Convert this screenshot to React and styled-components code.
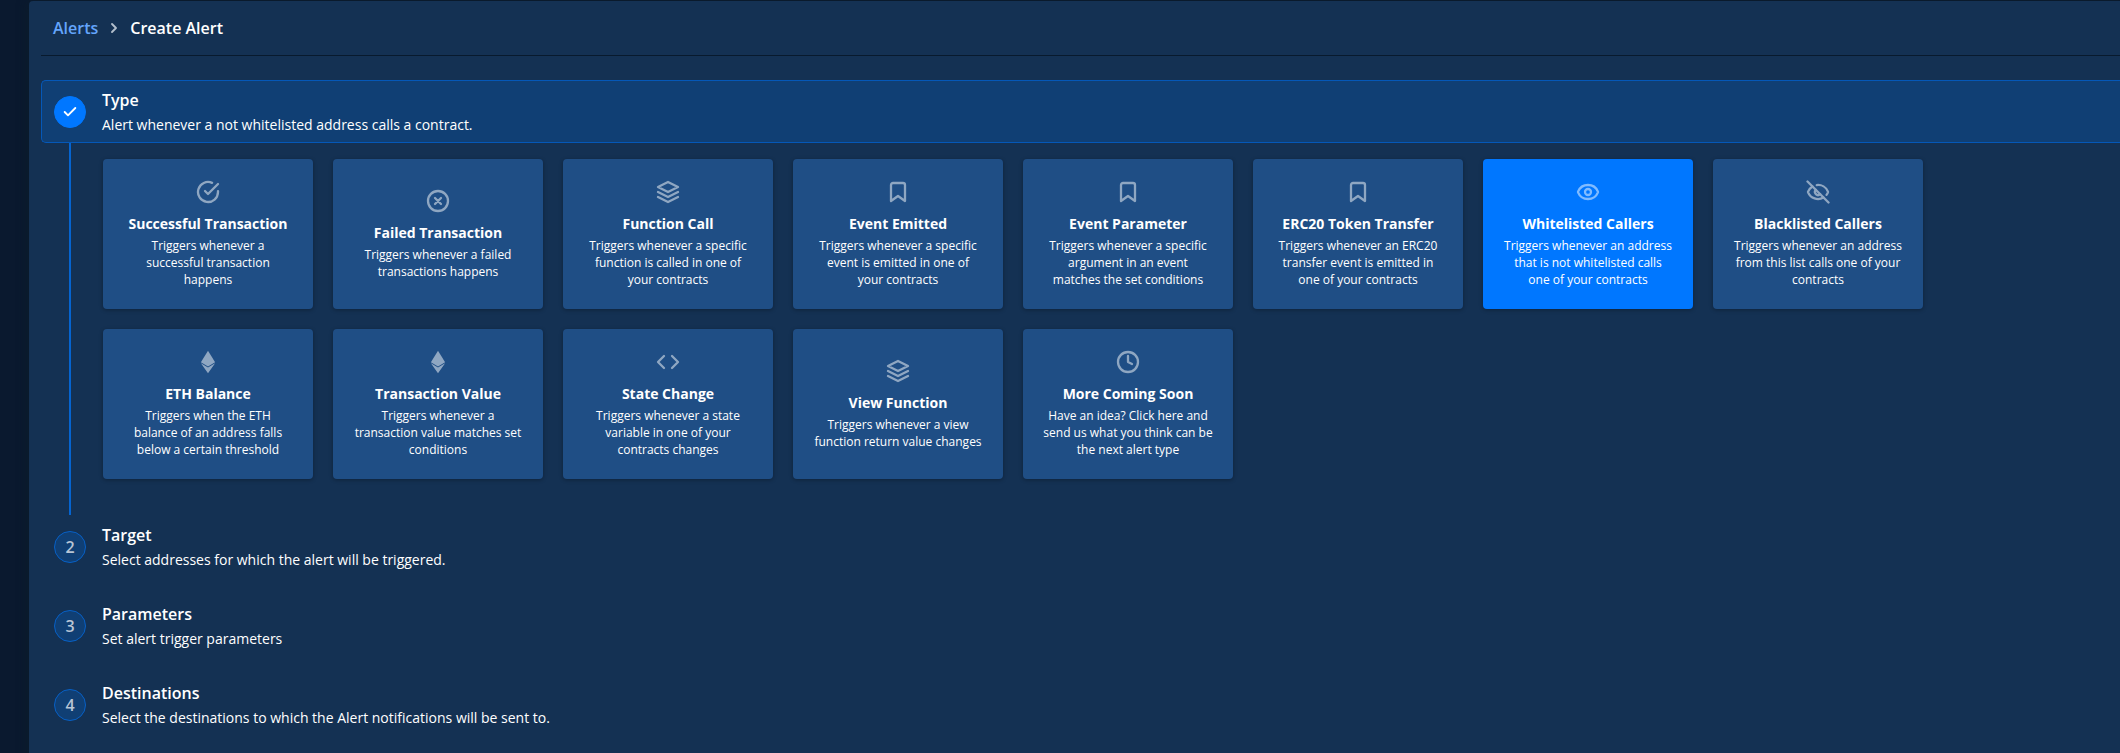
import React from "react";
import styled, { createGlobalStyle } from "styled-components";

const Global = createGlobalStyle`
  *, *::before, *::after { box-sizing: border-box; }
  body {
    margin: 0;
    background: #0a192f;
    color: #fff;
    font-family: "Open Sans", sans-serif;
    font-size: 14px;
    overflow: hidden;
  }
  h3, p { margin: 0; }
`;

const Page = styled.div`
  height: 753px;
  padding: 1px 0 0 29px;
  overflow: hidden;
`;

const Panel = styled.main`
  height: 800px;
  padding: 0 0 0 12px;
  background: #143153;
  border-top-left-radius: 4px;
  box-shadow: 0 0 12px rgba(12, 30, 42, 0.9);
`;

const Breadcrumbs = styled.nav`
  display: flex;
  align-items: center;
  height: 55px;
  padding: 0 0 0 12px;
  border-bottom: 1px solid #081a2e;
  font-size: 16px;
  font-weight: 600;
`;

const Crumb = styled.span`
  color: ${(p) => (p.$link ? "#64a5fc" : "#fff")};
`;

const CrumbArrow = styled.svg`
  width: 16px;
  height: 16px;
  margin: 0 8px;
  color: #b3bfcc;
`;

const Steps = styled.div`
  display: flex;
  flex-direction: column;
  margin-top: 24px;
`;

const StepHeader = styled.header`
  display: flex;
  align-items: center;
  gap: 16px;
  height: 63px;
  padding: 0 12px;
  margin-bottom: ${(p) => (p.$active ? "0" : "16px")};
  border: 1px solid ${(p) => (p.$active ? "#0558b8" : "transparent")};
  border-right: 0;
  border-radius: 5px 0 0 5px;
  background: ${(p) => (p.$active ? "#103f74" : "transparent")};
`;

const StepBadge = styled.div`
  display: flex;
  align-items: center;
  justify-content: center;
  flex: none;
  width: 32px;
  height: 32px;
  border-radius: 50%;
  border: 1px solid ${(p) => (p.$done ? "#0077ff" : "#0760c6")};
  background: ${(p) => (p.$done ? "#0077ff" : "#103f74")};
  color: ${(p) => (p.$done ? "#fff" : "#b8c5d5")};
  font-size: 16px;
  font-weight: 600;
`;

const StepLabel = styled.div`
  padding-top: 1px;
`;

const StepTitle = styled.h3`
  font-size: 16px;
  font-weight: 600;
  line-height: 24px;
`;

const StepText = styled.p`
  margin-top: 1px;
  font-size: 14px;
  line-height: 24px;
`;

const StepBody = styled.section`
  height: 372px;
  margin-left: 28px;
  padding: 16px 0 0 32px;
  border-left: 2px solid #0564d0;
`;

const CardGrid = styled.div`
  display: grid;
  grid-template-columns: repeat(8, 210px);
  grid-auto-rows: 150px;
  gap: 20px;
`;

const Card = styled.article`
  display: flex;
  flex-direction: column;
  align-items: center;
  justify-content: center;
  padding: 0 20px;
  border-radius: 4px;
  background: ${(p) => (p.$selected ? "#0077ff" : "#1f4e85")};
  box-shadow: 0 1px 4px rgba(0, 0, 0, 0.3);
  text-align: center;
`;

const CardIcon = styled.svg`
  width: 24px;
  height: 24px;
  flex: none;
  margin-bottom: 9px;
  color: #fff;
  opacity: 0.5;
`;

const CardTitle = styled.h3`
  font-size: 14px;
  font-weight: 700;
  line-height: 22px;
  white-space: nowrap;
`;

const CardText = styled.p`
  font-size: 12px;
  line-height: 17px;
  padding-top: 2px;
`;

const stroke = {
  fill: "none",
  stroke: "currentColor",
  strokeWidth: 2.3,
  strokeLinecap: "round",
  strokeLinejoin: "round",
};

const icons = {
  check: (
    <g {...stroke}>
      <path d="M22 11.08V12a10 10 0 1 1-5.93-9.14" />
      <polyline points="22 4 12 14.01 9 11.01" />
    </g>
  ),
  cross: (
    <g {...stroke}>
      <circle cx="12" cy="12" r="10" />
      <path d="M15 9l-6 6M9 9l6 6" />
    </g>
  ),
  layers: (
    <g {...stroke}>
      <polygon points="12 2 2 7 12 12 22 7 12 2" />
      <polyline points="2 17 12 22 22 17" />
      <polyline points="2 12 12 17 22 12" />
    </g>
  ),
  bookmark: (
    <g {...stroke}>
      <path d="M19 21l-7-5-7 5V5a2 2 0 0 1 2-2h10a2 2 0 0 1 2 2z" />
    </g>
  ),
  eye: (
    <g {...stroke}>
      <path d="M2.062 12.348a1 1 0 0 1 0-.696 10.75 10.75 0 0 1 19.876 0 1 1 0 0 1 0 .696 10.75 10.75 0 0 1-19.876 0" />
      <circle cx="12" cy="12" r="3" />
    </g>
  ),
  eyeOff: (
    <g {...stroke}>
      <path d="M10.733 5.076a10.744 10.744 0 0 1 11.205 6.575 1 1 0 0 1 0 .696 10.747 10.747 0 0 1-1.444 2.49" />
      <path d="M14.084 14.158a3 3 0 0 1-4.242-4.242" />
      <path d="M17.479 17.499a10.75 10.75 0 0 1-15.417-5.151 1 1 0 0 1 0-.696 10.75 10.75 0 0 1 4.446-5.143" />
      <path d="M1.5 1.5l21 21" />
    </g>
  ),
  eth: (
    <g fill="currentColor">
      <path d="M12 0.8 19.1 12.3 12 16.4 4.9 12.3z" />
      <path d="M4.9 13.3 12 17.4 19.1 13.3 12 23.2z" />
    </g>
  ),
  code: (
    <g {...stroke}>
      <polyline points="16 18 22 12 16 6" />
      <polyline points="8 6 2 12 8 18" />
    </g>
  ),
  clock: (
    <g {...stroke}>
      <circle cx="12" cy="12" r="10" />
      <polyline points="12 6 12 12 16 14" />
    </g>
  ),
};

const alertTypes = [
  ["check", "Successful Transaction", "Triggers whenever a successful transaction happens"],
  ["cross", "Failed Transaction", "Triggers whenever a failed transactions happens"],
  ["layers", "Function Call", "Triggers whenever a specific function is called in one of your contracts"],
  ["bookmark", "Event Emitted", "Triggers whenever a specific event is emitted in one of your contracts"],
  ["bookmark", "Event Parameter", "Triggers whenever a specific argument in an event matches the set conditions"],
  ["bookmark", "ERC20 Token Transfer", "Triggers whenever an ERC20 transfer event is emitted in one of your contracts"],
  ["eye", "Whitelisted Callers", "Triggers whenever an address that is not whitelisted calls one of your contracts"],
  ["eyeOff", "Blacklisted Callers", "Triggers whenever an address from this list calls one of your contracts"],
  ["eth", "ETH Balance", "Triggers when the ETH balance of an address falls below a certain threshold"],
  ["eth", "Transaction Value", "Triggers whenever a transaction value matches set conditions"],
  ["code", "State Change", "Triggers whenever a state variable in one of your contracts changes"],
  ["layers", "View Function", "Triggers whenever a view function return value changes"],
  ["clock", "More Coming Soon", "Have an idea? Click here and send us what you think can be the next alert type"],
];

const pendingSteps = [
  [2, "Target", "Select addresses for which the alert will be triggered."],
  [3, "Parameters", "Set alert trigger parameters"],
  [4, "Destinations", "Select the destinations to which the Alert notifications will be sent to."],
];

function Step({ badge, title, text, active }) {
  return (
    <StepHeader $active={active}>
      <StepBadge $done={active}>{badge}</StepBadge>
      <StepLabel>
        <StepTitle>{title}</StepTitle>
        <StepText>{text}</StepText>
      </StepLabel>
    </StepHeader>
  );
}

export default function App() {
  return (
    <Page>
      <Global />
      <Panel>
        <Breadcrumbs>
          <Crumb $link>Alerts</Crumb>
          <CrumbArrow viewBox="0 0 24 24">
            <polyline {...stroke} strokeWidth={2.8} points="9 18 15 12 9 6" />
          </CrumbArrow>
          <Crumb>Create Alert</Crumb>
        </Breadcrumbs>
        <Steps>
          <Step
            active
            badge={
              <svg width="16" height="16" viewBox="0 0 24 24">
                <polyline {...stroke} strokeWidth={2.8} points="20 6 9 17 4 12" />
              </svg>
            }
            title="Type"
            text="Alert whenever a not whitelisted address calls a contract."
          />
          <StepBody>
            <CardGrid>
              {alertTypes.map(([icon, title, text]) => (
                <Card key={title} $selected={title === "Whitelisted Callers"}>
                  <CardIcon viewBox="0 0 24 24">{icons[icon]}</CardIcon>
                  <CardTitle>{title}</CardTitle>
                  <CardText>{text}</CardText>
                </Card>
              ))}
            </CardGrid>
          </StepBody>
          {pendingSteps.map(([n, title, text]) => (
            <Step key={n} badge={n} title={title} text={text} />
          ))}
        </Steps>
      </Panel>
    </Page>
  );
}
